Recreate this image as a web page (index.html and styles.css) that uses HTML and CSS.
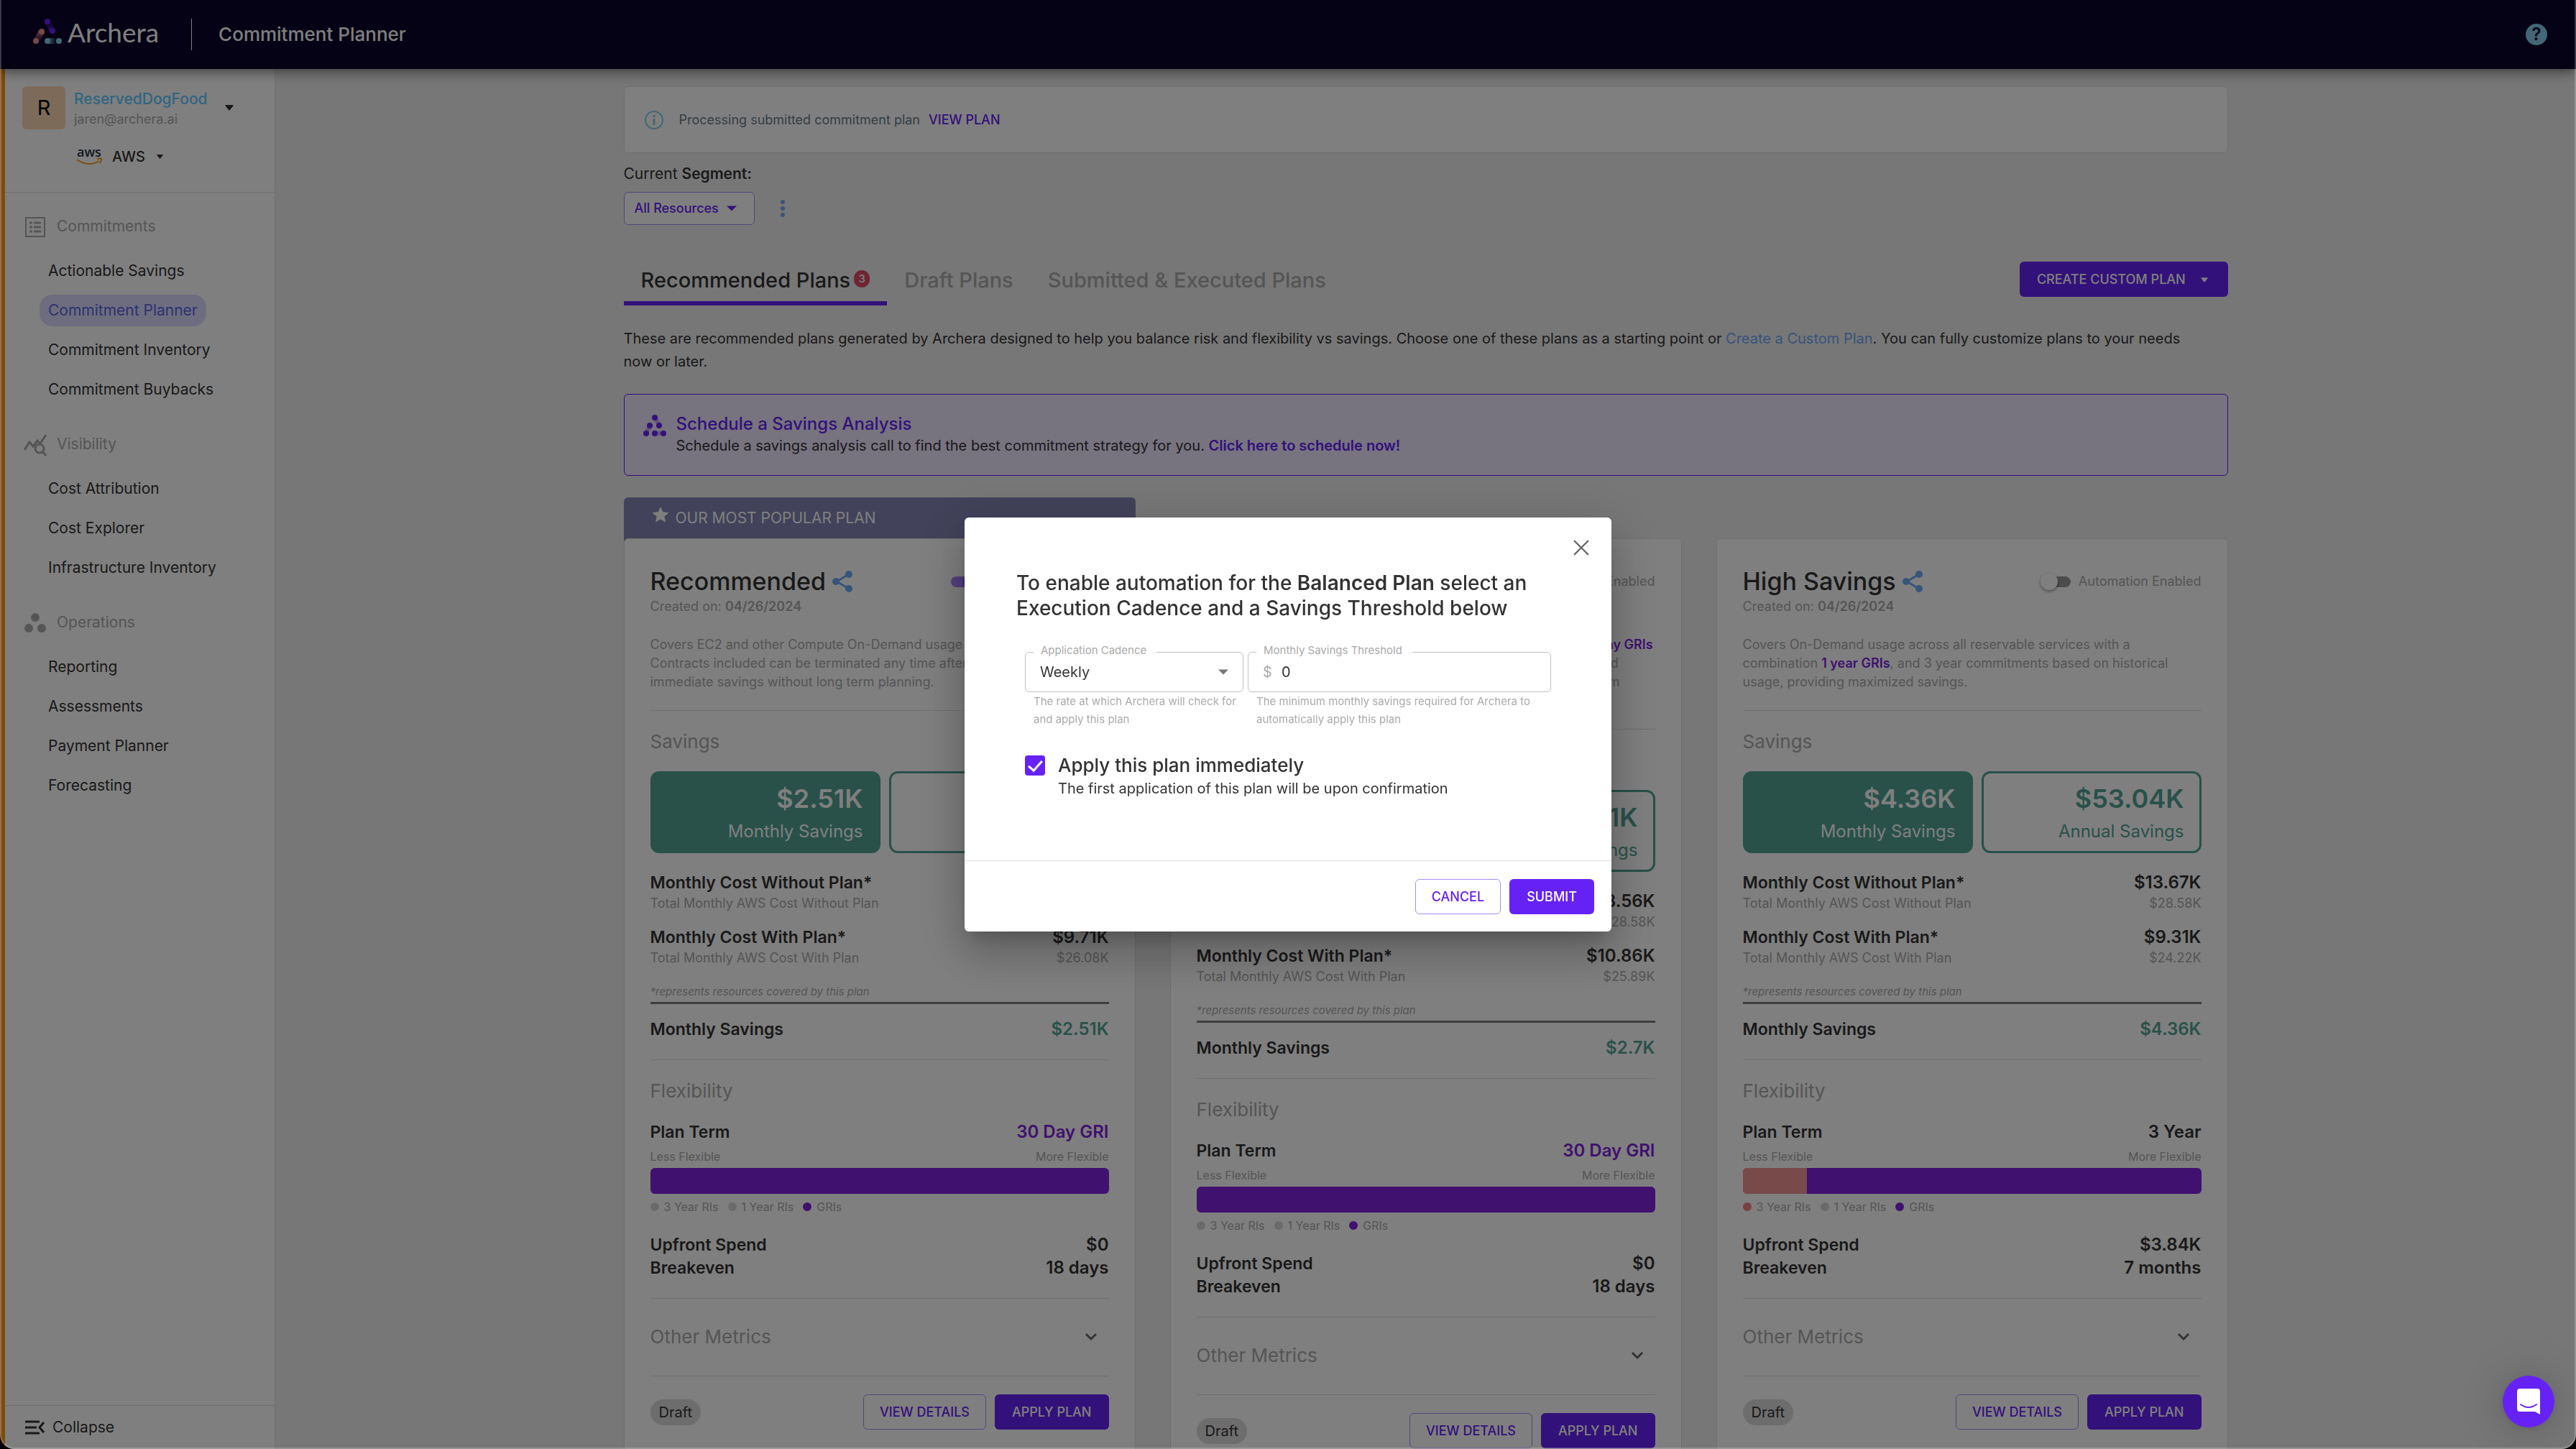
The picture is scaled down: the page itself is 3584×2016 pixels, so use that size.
FILE: index.html
```html
<!DOCTYPE html>
<html lang="en">
<head>
  <meta charset="UTF-8" />
  <meta name="viewport" content="width=device-width, initial-scale=1.0"/>
  <title>Archera - Commitment Planner</title>
  <link rel="stylesheet" href="styles.css">
</head>
<body>
  <svg class="sprite" aria-hidden="true">
    <symbol id="caret" viewBox="0 0 12 8"><path d="M1 0h10q1 0 .6 1L7 7q-1 1-2 0L.4 1Q0 0 1 0z"/></symbol>
    <symbol id="triangle" viewBox="0 0 10 5"><path d="M0 0l5 5 5-5z"/></symbol>
    <symbol id="share" viewBox="0 0 28 30"><path d="M23 5L6 15l17 10" fill="none" stroke="currentColor" stroke-width="3"/><circle cx="23" cy="5" r="5"/><circle cx="5" cy="15" r="5"/><circle cx="23" cy="25" r="5"/></symbol>
    <symbol id="chevron" viewBox="0 0 18 12"><path d="M2 2l7 7 7-7" fill="none" stroke="currentColor" stroke-width="3"/></symbol>
  </svg>

  <header class="top-bar">
    <svg class="logo-mark" viewBox="0 0 40 36">
      <defs>
        <linearGradient id="fadeTop" x1="0" y1="0" x2="0" y2="1"><stop offset="0" stop-color="#6622f5" stop-opacity=".1"/><stop offset="1" stop-color="#6622f5" stop-opacity=".8"/></linearGradient>
        <linearGradient id="fadeLeft" x1="0" y1="1" x2="0" y2="0"><stop offset="0" stop-color="#f09090" stop-opacity=".1"/><stop offset="1" stop-color="#f09090" stop-opacity=".8"/></linearGradient>
        <linearGradient id="fadeRight"><stop offset="0" stop-color="#86cfee" stop-opacity=".9"/><stop offset=".7" stop-color="#86cfee" stop-opacity=".1"/></linearGradient>
      </defs>
      <path d="M16 6l7-4 8 14-7 4z" fill="url(#fadeTop)"/>
      <path d="M8 16l8 4-8 13-7-4z" fill="url(#fadeLeft)"/>
      <path d="M20 27h16v8H20z" fill="url(#fadeRight)"/>
      <g fill="#6622f5"><circle cx="20" cy="4" r="4"/><circle cx="27" cy="17" r="4"/></g>
      <g fill="#f09090"><circle cx="12" cy="18" r="4"/><circle cx="4" cy="31" r="4"/></g>
      <g fill="#86cfee"><circle cx="20" cy="31" r="4"/><circle cx="36" cy="31" r="4"/></g>
    </svg>
    <span class="logo-text">Archera</span>
    <h1>Commitment Planner</h1>
    <button class="help-btn" aria-label="Help">?</button>
  </header>

  <div class="layout">
    <aside class="sidebar">
      <div class="account">
        <button class="account-btn">
          <span class="avatar">R</span>
          <span class="account-info"><b>ReservedDogFood</b><small>jaren@archera.ai</small></span>
          <svg class="caret"><use href="#caret"/></svg>
        </button>
        <button class="provider-btn">
          <svg class="aws" viewBox="0 0 36 24">
            <text x="1" y="12">aws</text>
            <path d="M1 16q16 11 31 2" fill="none" stroke="#f79a1f" stroke-width="2"/>
            <path d="M29 15q5-1 6 0t-2 6" fill="none" stroke="#f79a1f" stroke-width="2"/>
          </svg>
          AWS
          <svg class="caret small"><use href="#caret"/></svg>
        </button>
      </div>

      <nav class="menu">
        <section>
          <h2>
            <svg viewBox="0 0 32 32"><path d="M3 3h26v26H3z" fill="none" stroke="currentColor" stroke-width="2"/><path d="M8 10h4M8 16h4M8 22h4M14 10h10M14 16h10M14 22h10" stroke="currentColor" stroke-width="3"/></svg>
            Commitments
          </h2>
          <a href="#">Actionable Savings</a>
          <a href="#" class="active">Commitment Planner</a>
          <a href="#">Commitment Inventory</a>
          <a href="#">Commitment Buybacks</a>
        </section>
        <section>
          <h2>
            <svg viewBox="0 0 32 32"><path d="M1 23L8 12l5 6 6-8 4 4 8-12M27 26l4 5" fill="none" stroke="currentColor" stroke-width="3"/><circle cx="22" cy="21" r="6" fill="none" stroke="currentColor" stroke-width="3"/></svg>
            Visibility
          </h2>
          <a href="#">Cost Attribution</a>
          <a href="#">Cost Explorer</a>
          <a href="#">Infrastructure Inventory</a>
        </section>
        <section>
          <h2>
            <svg viewBox="0 0 32 32" fill="currentColor"><circle cx="16" cy="8" r="6"/><circle cx="7" cy="23" r="6"/><circle cx="25" cy="23" r="6"/></svg>
            Operations
          </h2>
          <a href="#">Reporting</a>
          <a href="#">Assessments</a>
          <a href="#">Payment Planner</a>
          <a href="#">Forecasting</a>
        </section>
      </nav>

      <button class="collapse-btn">
        <svg viewBox="0 0 28 20"><path d="M0 2h20M0 10h16M0 18h20M26 3l-6 7 6 7" fill="none" stroke="currentColor" stroke-width="3"/></svg>
        Collapse
      </button>
    </aside>

    <main>
      <div class="content">
        <div class="alert">
          <svg viewBox="0 0 28 28"><circle cx="14" cy="14" r="12" fill="none" stroke="currentColor" stroke-width="2"/><path d="M14 12v9M14 7v3" stroke="currentColor" stroke-width="3"/></svg>
          <span>Processing submitted commitment plan</span>
          <a href="#">VIEW PLAN</a>
        </div>

        <p class="segment-label">Current <b>Segment:</b></p>
        <div class="segment-row">
          <button class="segment-btn">All Resources <svg><use href="#triangle"/></svg></button>
          <button class="dots-btn" aria-label="More"><svg viewBox="0 0 6 24"><circle cx="3" cy="3" r="3"/><circle cx="3" cy="12" r="3"/><circle cx="3" cy="21" r="3"/></svg></button>
        </div>

        <div class="tabs">
          <button class="tab active">Recommended Plans<span class="badge">3</span></button>
          <button class="tab">Draft Plans</button>
          <button class="tab">Submitted &amp; Executed Plans</button>
          <button class="btn primary create-btn">CREATE CUSTOM PLAN <svg><use href="#caret"/></svg></button>
        </div>

        <p class="intro">These are recommended plans generated by Archera designed to help you balance risk and flexibility vs savings. Choose one of these plans as a starting point or <a href="#">Create a Custom Plan</a>. You can fully customize plans to your needs<br>now or later.</p>

        <div class="banner">
          <svg viewBox="0 0 32 30">
            <path d="M13 4l6-2 6 12-5 3zM7 13l6 3-6 10-5-3zM16 23h12v6H16z" opacity=".3"/>
            <circle cx="16" cy="4" r="4"/><circle cx="9" cy="15" r="4"/><circle cx="22" cy="15" r="4"/><circle cx="4" cy="26" r="4"/><circle cx="16" cy="26" r="4"/><circle cx="28" cy="26" r="4"/>
          </svg>
          <div>
            <h3>Schedule a Savings Analysis</h3>
            <p>Schedule a savings analysis call to find the best commitment strategy for you. <a href="#">Click here to schedule now!</a></p>
          </div>
        </div>

        <div id="plans" class="plans"></div>
      </div>
    </main>
  </div>

  <!-- Modal -->
  <div class="modal">
    <form class="modal-content" role="dialog" aria-labelledby="modalTitle">
      <button type="button" class="close-btn" aria-label="Close"><svg viewBox="0 0 20 20"><path d="M1 1l18 18M19 1L1 19" stroke="currentColor" stroke-width="2"/></svg></button>
      <div class="modal-body">
        <h2 id="modalTitle">To enable automation for the <b>Balanced Plan</b> select an Execution Cadence and a Savings Threshold below</h2>
        <div class="fields">
          <div class="field cadence">
            <label for="cadence">Application Cadence</label>
            <div class="field-box">
              <select id="cadence">
                <option>Weekly</option>
                <option>Monthly</option>
              </select>
              <svg><use href="#triangle"/></svg>
            </div>
            <p>The rate at which Archera will check for and apply this plan</p>
          </div>
          <div class="field threshold">
            <label for="threshold">Monthly Savings Threshold</label>
            <div class="field-box">
              <span>$</span>
              <input type="text" id="threshold" value="0">
            </div>
            <p>The minimum monthly savings required for Archera to automatically apply this plan</p>
          </div>
        </div>
        <div class="check-row">
          <input type="checkbox" id="applyNow" checked>
          <div>
            <label for="applyNow">Apply this plan immediately</label>
            <p>The first application of this plan will be upon confirmation</p>
          </div>
        </div>
      </div>
      <div class="modal-actions">
        <button type="button" class="btn outline">CANCEL</button>
        <button type="button" class="btn primary">SUBMIT</button>
      </div>
    </form>
  </div>

  <button class="chat-btn" aria-label="Open chat">
    <svg viewBox="0 0 32 36"><path d="M4 0h24q4 0 4 4v32l-7-4H4q-4 0-4-4V4q0-4 4-4z" fill="#fff"/><path d="M5 22q11 8 22 0" fill="none" stroke="#6622f5" stroke-width="2" stroke-linecap="round"/></svg>
  </button>
  <div class="window-edge"></div>

  <!-- JS -->
  <script>
    const plans = [
      {
        name: "Recommended",
        popular: true,
        automated: true,
        description: "Covers EC2 and other Compute On-Demand usage with GRIs.<br>Contracts included can be terminated any time after 30 days, for<br>immediate savings without long term planning.",
        monthly: "$2.51K", annual: "$30.54K",
        without: "$12.22K", totalWithout: "$28.58K",
        withPlan: "$9.71K", totalWith: "$26.08K",
        term: "30 Day GRI", gri: true, threeYear: 0,
        upfront: "$0", breakeven: "18 days"
      },
      {
        name: "Balanced",
        automated: false,
        description: "Covers On-Demand usage across all reservable services with <b>30 Day GRIs</b><br>and 1 year GRIs. All contracts included in the plans can be terminated<br>after 30 days or one year, giving flexible savings over the longer term<br>without a multi year commitment.",
        monthly: "$2.7K", annual: "$32.81K",
        without: "$13.56K", totalWithout: "$28.58K",
        withPlan: "$10.86K", totalWith: "$25.89K",
        term: "30 Day GRI", gri: true, threeYear: 0,
        upfront: "$0", breakeven: "18 days"
      },
      {
        name: "High Savings",
        automated: false,
        description: "Covers On-Demand usage across all reservable services with a combination <b>1 year GRIs</b>, and 3 year commitments based on historical usage, providing maximized savings.",
        monthly: "$4.36K", annual: "$53.04K",
        without: "$13.67K", totalWithout: "$28.58K",
        withPlan: "$9.31K", totalWith: "$24.22K",
        term: "3 Year", gri: false, threeYear: 14,
        upfront: "$3.84K", breakeven: "7 months"
      }
    ];

    function renderPlans() {
      const container = document.getElementById('plans');
      plans.forEach((p, i) => {
        const plan = document.createElement('div');
        plan.className = 'plan';
        plan.innerHTML = `
          ${p.popular ? `<div class="ribbon"><svg viewBox="0 0 24 24"><path d="M12 1l3.400 7.300 8 .9-6 5.400 1.700 7.900-7.100-4-7.100 4 1.700-7.900-6-5.400 8-.9z"/></svg>OUR MOST POPULAR PLAN</div>` : ''}
          <article class="plan-card">
            <div class="plan-head">
              <h3>${p.name}</h3>
              <button class="share-btn" aria-label="Share"><svg><use href="#share"/></svg></button>
              <input type="checkbox" class="switch" id="auto${i}" ${p.automated ? 'checked' : ''}>
              <label for="auto${i}">Automation Enabled</label>
            </div>
            <p class="muted">Created on: <b>04/26/2024</b></p>
            <p class="muted description">${p.description}</p>
            <hr>
            <h4>Savings</h4>
            <div class="savings">
              <div class="saving filled"><strong>${p.monthly}</strong><span>Monthly Savings</span></div>
              <div class="saving"><strong>${p.annual}</strong><span>Annual Savings</span></div>
            </div>
            <div class="cost">
              <div class="line"><span>Monthly Cost Without Plan*</span><span>${p.without}</span></div>
              <div class="line muted"><span>Total Monthly AWS Cost Without Plan</span><span>${p.totalWithout}</span></div>
            </div>
            <div class="cost">
              <div class="line"><span>Monthly Cost With Plan*</span><span>${p.withPlan}</span></div>
              <div class="line muted"><span>Total Monthly AWS Cost With Plan</span><span>${p.totalWith}</span></div>
            </div>
            <p class="note">*represents resources covered by this plan</p>
            <div class="line total"><span>Monthly Savings</span><span class="green">${p.monthly}</span></div>
            <hr>
            <h4>Flexibility</h4>
            <div class="line"><span>Plan Term</span><span class="${p.gri ? 'gri' : ''}">${p.term}</span></div>
            <div class="scale"><span>Less Flexible</span><span>More Flexible</span></div>
            <div class="bar"><div style="width:${p.threeYear}%"></div></div>
            <div class="legend">
              <span class="${p.threeYear ? 'three-year' : ''}">3 Year RIs</span>
              <span>1 Year RIs</span>
              <span class="gris">GRIs</span>
            </div>
            <div class="line"><span>Upfront Spend</span><span>${p.upfront}</span></div>
            <div class="line"><span>Breakeven</span><span>${p.breakeven}</span></div>
            <hr>
            <button class="metrics-btn">Other Metrics <svg><use href="#chevron"/></svg></button>
            <hr>
            <div class="plan-actions">
              <span class="chip">Draft</span>
              <button class="btn outline">VIEW DETAILS</button>
              <button class="btn primary">APPLY PLAN</button>
            </div>
          </article>
        `;
        container.appendChild(plan);
      });
    }

    renderPlans();
  </script>
</body>
</html>
```
FILE: styles.css
```css
:root {
  --primary-color: #6622f5;
  --primary-border: #a98bf7;
  --gri-color: #8022dd;
  --green: #52a292;
  --blue: #6fa8f5;
  --text: #333;
  --muted: #aaa;
  --line: #dfdfdf;
}

* {
  box-sizing: border-box;
}

body {
  font-family: Inter, 'Liberation Sans', sans-serif;
  font-size: 20px;
  line-height: 32px;
  color: var(--text);
  margin: 0;
  height: 100vh;
  overflow: hidden;
  display: flex;
  flex-direction: column;
  background: #eee;
}

h1, h2, h3, h4, p {
  margin: 0;
}

button, input, select {
  font: inherit;
  color: inherit;
  background: none;
  border: none;
  padding: 0;
  margin: 0;
}

button {
  cursor: pointer;
}

a {
  text-decoration: none;
  color: inherit;
}

svg {
  fill: currentColor;
  flex: none;
}

b {
  font-weight: 600;
}

.sprite {
  display: none;
}

/* Header */
.top-bar {
  display: flex;
  align-items: center;
  height: 96px;
  flex: none;
  padding: 0 40px 0 46px;
  background: #080428;
  color: #fff;
  box-shadow: 0 4px 16px rgba(0,0,0,0.5);
  z-index: 1;
}

.logo-mark {
  width: 40px;
  height: 36px;
  margin: 0 8px 8px 0;
}

.logo-text {
  font-family: Lato, sans-serif;
  font-size: 37px;
  line-height: 38px;
  padding: 0 45px 6px 0;
  margin-right: 37px;
  border-right: 1px solid #fff;
}

.top-bar h1 {
  flex: 1;
  font-size: 26px;
  font-weight: 500;
}

.help-btn {
  width: 30px;
  height: 30px;
  border-radius: 50%;
  background: #86cfee;
  color: #080428;
  font-size: 24px;
  font-weight: 600;
  line-height: 30px;
}

.layout {
  flex: 1;
  min-height: 0;
  display: flex;
}

/* Sidebar */
.sidebar {
  width: 383px;
  flex: none;
  display: flex;
  flex-direction: column;
  font-size: 21px;
  background: #fff;
  border-left: 7px solid #f9971f;
  border-right: 1px solid var(--line);
}

.account {
  padding: 24px 24px 33px;
  border-bottom: 1px solid var(--line);
}

.account-btn {
  display: flex;
  align-items: center;
  text-align: left;
}

.avatar {
  width: 60px;
  height: 60px;
  border-radius: 6px;
  background: #fbd6b2;
  color: #000;
  font-size: 29px;
  line-height: 60px;
  text-align: center;
  margin-right: 12px;
}

.account-info b {
  display: block;
  font-weight: 500;
  line-height: 32px;
  color: #5ecbff;
}

.account-info small {
  display: block;
  font-size: 18px;
  line-height: 24px;
  color: var(--muted);
}

.caret {
  width: 12px;
  height: 8px;
  margin-left: 24px;
}

.caret.small {
  width: 9px;
  height: 6px;
  margin-left: 16px;
}

.provider-btn {
  display: flex;
  align-items: center;
  margin: 22px 0 0 75px;
  font-size: 20px;
  font-weight: 500;
}

.aws {
  width: 36px;
  height: 24px;
  margin-right: 14px;
  overflow: visible;
}

.aws text {
  font-family: 'Open Sans', sans-serif;
  font-size: 18px;
  font-weight: 600;
  fill: #252f3e;
}

.menu {
  flex: 1;
  padding: 30px 24px 0;
}

.menu section {
  margin-bottom: 37px;
}

.menu h2 {
  display: flex;
  align-items: center;
  font-size: 21px;
  font-weight: 400;
  color: var(--muted);
  margin-bottom: 23px;
}

.menu h2 svg {
  width: 32px;
  height: 32px;
  margin: 2px 14px 0 2px;
}

.menu a {
  display: block;
  width: fit-content;
  margin: 0 0 11px 24px;
  padding: 6px 12px;
  border-radius: 18px;
}

.menu a.active {
  background: #dadbff;
  color: #5a66e0;
}

.collapse-btn {
  display: flex;
  align-items: center;
  padding: 14px 28px;
  border-top: 1px solid var(--line);
}

.collapse-btn svg {
  width: 28px;
  height: 20px;
  margin-right: 10px;
}

/* Content */
main {
  flex: 1;
  min-width: 0;
  padding-top: 24px;
}

.content {
  max-width: 2232px;
  margin: auto;
}

.alert {
  display: flex;
  align-items: center;
  height: 93px;
  padding: 0 27px;
  background: #fff;
  border: 1px solid var(--line);
  border-radius: 6px;
  font-size: 18px;
  color: #6c7c88;
}

.alert svg {
  width: 28px;
  height: 28px;
  color: #86cfee;
}

.alert span {
  margin: 0 12px 0 21px;
}

.alert a {
  color: var(--primary-color);
  font-weight: 500;
}

.segment-label {
  margin-top: 13px;
  font-size: 21px;
}

.segment-row {
  display: flex;
  align-items: center;
  margin-top: 9px;
}

.segment-btn {
  height: 46px;
  padding: 0 24px 0 14px;
  border: 1px solid var(--primary-border);
  border-radius: 6px;
  background: #fff;
  color: var(--primary-color);
  font-size: 18px;
  font-weight: 500;
}

.segment-btn svg {
  width: 14px;
  height: 8px;
  margin: 0 0 2px 6px;
}

.dots-btn {
  margin-left: 36px;
  color: var(--blue);
  line-height: 0;
}

.dots-btn svg {
  width: 6px;
  height: 24px;
}

.tabs {
  display: flex;
  align-items: flex-start;
  margin-top: 47px;
}

.tab {
  display: flex;
  padding: 12px 24px 11px;
  border-bottom: 6px solid transparent;
  font-size: 29px;
  font-weight: 500;
  line-height: 36px;
  color: var(--muted);
}

.tab.active {
  color: var(--text);
  border-color: var(--primary-color);
}

.badge {
  width: 22px;
  height: 24px;
  margin: 4px 0 0 5px;
  border-radius: 12px;
  background: #de4a64;
  color: #fff;
  font-size: 15px;
  line-height: 24px;
  text-align: center;
}

.btn {
  height: 49px;
  padding: 0 24px;
  border-radius: 6px;
  font-size: 18px;
  font-weight: 500;
}

.btn.primary {
  background: var(--primary-color);
  color: #fff;
}

.btn.outline {
  padding: 0 22px;
  border: 1px solid var(--primary-border);
  background: #fff;
  color: var(--primary-color);
}

.create-btn {
  margin: 4px 0 0 auto;
}

.create-btn svg {
  width: 10px;
  height: 7px;
  margin: 0 4px 2px 16px;
}

.intro {
  margin-top: 30px;
}

.intro a {
  color: var(--blue);
}

.banner {
  display: flex;
  margin-top: 29px;
  padding: 26px;
  border: 1px solid var(--primary-color);
  border-radius: 6px;
  background: #eee6fe;
}

.banner > svg {
  width: 32px;
  height: 30px;
  margin: 2px 14px 0 0;
  color: var(--primary-color);
}

.banner h3 {
  font-size: 24px;
  font-weight: 500;
  line-height: 30px;
  color: var(--primary-color);
}

.banner p {
  line-height: 30px;
}

.banner a {
  color: var(--primary-color);
  font-weight: 600;
}

/* Plans */
.plans {
  display: grid;
  grid-template-columns: repeat(3, 1fr);
  align-items: start;
  gap: 48px;
  margin-top: 30px;
}

.plan {
  display: grid;
  grid-template-rows: 57px auto;
}

.ribbon {
  height: 63px;
  padding: 8px 39px;
  border-radius: 6px 6px 0 0;
  background: #8484b4;
  color: #fff;
  font-size: 21px;
  line-height: 42px;
}

.ribbon svg {
  width: 24px;
  height: 24px;
  margin-right: 9px;
}

.plan-card {
  grid-row: 2;
  padding: 37px 36px;
  background: #fff;
  border: 1px solid var(--line);
  border-radius: 6px;
}

.plan-head {
  display: flex;
  align-items: center;
  height: 44px;
}

.plan-head h3 {
  font-size: 34px;
  font-weight: 500;
}

.share-btn {
  margin: 0 auto 0 9px;
  color: var(--blue);
  line-height: 0;
}

.share-btn svg {
  width: 28px;
  height: 30px;
}

.plan-head label {
  font-size: 18px;
  color: var(--muted);
}

.switch {
  appearance: none;
  width: 38px;
  height: 15px;
  margin-right: 11px;
  border-radius: 8px;
  background: #999;
  display: flex;
  align-items: center;
}

.switch::before {
  content: "";
  width: 24px;
  height: 24px;
  flex: none;
  margin: 0 -4px;
  border-radius: 50%;
  background: #fff;
  box-shadow: 0 2px 4px rgba(0,0,0,0.4);
}

.switch:checked {
  background: #a880ff;
  justify-content: flex-end;
}

.switch:checked::before {
  background: var(--primary-color);
}

.muted {
  font-size: 18px;
  line-height: 26px;
  color: var(--muted);
}

.description {
  margin-top: 27px;
}

.description b {
  color: var(--gri-color);
}

hr {
  height: 1px;
  margin: 26px 0 25px;
  border: none;
  background: var(--line);
}

h4 {
  margin-bottom: 23px;
  font-size: 26px;
  font-weight: 400;
  line-height: 36px;
  color: var(--muted);
}

.savings {
  display: flex;
  gap: 12px;
  margin-bottom: 25px;
}

.saving {
  flex: 1;
  padding: 13px 21px 9px;
  border: 3px solid var(--green);
  border-radius: 12px;
  color: var(--green);
  text-align: right;
}

.saving.filled {
  flex: 0 0 320px;
  background: var(--green);
  color: #fff;
}

.saving strong {
  display: block;
  font-size: 36px;
  font-weight: 600;
  line-height: 44px;
  margin-bottom: 6px;
}

.saving span {
  display: block;
  font-size: 24px;
  line-height: 36px;
}

.cost {
  margin-bottom: 18px;
}

.line {
  display: flex;
  justify-content: space-between;
  font-size: 24px;
  font-weight: 600;
}

.line span:first-child {
  font-size: 23px;
}

.line.muted span {
  font-size: 18px;
  font-weight: 400;
}

.note {
  margin-top: 22px;
  padding-bottom: 2px;
  border-bottom: 3px solid #7c7c7c;
  font-size: 15px;
  font-style: italic;
  line-height: 24px;
  color: var(--muted);
}

.total {
  margin-top: 19px;
}

.green {
  color: var(--green);
}

.gri {
  color: var(--gri-color);
}

.scale {
  display: flex;
  justify-content: space-between;
  margin: 6px 0 4px;
  font-size: 16px;
  line-height: 24px;
  color: var(--muted);
}

.bar {
  height: 36px;
  border-radius: 6px;
  overflow: hidden;
  background: var(--gri-color);
}

.bar div {
  height: 100%;
  background: #f09494;
}

.legend {
  display: flex;
  gap: 13px;
  margin: 6px 0 25px;
  font-size: 16px;
  line-height: 24px;
  color: var(--muted);
}

.legend span::before {
  content: "";
  display: inline-block;
  width: 12px;
  height: 12px;
  margin-right: 7px;
  border-radius: 50%;
  background: #d5d5d5;
}

.legend .three-year::before {
  background: #f08080;
}

.legend .gris::before {
  background: var(--gri-color);
}

.metrics-btn {
  display: flex;
  align-items: center;
  justify-content: space-between;
  width: 100%;
  padding: 10px 16px 10px 0;
  font-size: 26px;
  line-height: 36px;
  color: var(--muted);
}

.metrics-btn svg {
  width: 18px;
  height: 12px;
  color: #666;
}

.plan-actions {
  display: flex;
  align-items: center;
  gap: 12px;
}

.chip {
  margin-right: auto;
  padding: 2px 12px;
  border-radius: 18px;
  background: #dadada;
}

/* Modal */
.modal {
  position: fixed;
  top: 0; left: 0; right: 0; bottom: 0;
  background-color: rgba(0,0,0,0.5);
  display: flex;
  align-items: center;
  justify-content: center;
  z-index: 10;
}

.modal-content {
  position: relative;
  width: 900px;
  background: #fff;
  border-radius: 6px;
  box-shadow: 0 16px 22px -10px rgba(0,0,0,0.2), 0 36px 57px 4px rgba(0,0,0,0.14), 0 14px 69px 12px rgba(0,0,0,0.12);
}

.close-btn {
  position: absolute;
  top: 31px;
  right: 31px;
  color: #666;
  line-height: 0;
}

.close-btn svg {
  width: 22px;
  height: 22px;
}

.modal-body {
  padding: 74px 72px 84px;
}

.modal h2 {
  font-size: 28px;
  font-weight: 500;
  line-height: 35px;
}

.fields {
  display: flex;
  gap: 6px;
  margin: 43px 12px 36px;
}

.field {
  position: relative;
}

.cadence {
  flex: 0 0 304px;
}

.threshold {
  flex: 1;
}

.field label {
  position: absolute;
  top: -12px;
  left: 12px;
  padding: 0 14px 0 10px;
  background: #fff;
  font-size: 15px;
  line-height: 20px;
  color: var(--muted);
}

.field-box {
  display: flex;
  align-items: center;
  height: 56px;
  padding: 0 20px;
  border: 1px solid #c0c0c0;
  border-radius: 6px;
}

.field-box select, .field-box input {
  appearance: none;
  flex: 1;
  min-width: 0;
}

.field-box span {
  width: 26px;
  color: var(--muted);
}

.field-box svg {
  width: 14px;
  height: 8px;
  color: #777;
}

.field p {
  padding-left: 12px;
  font-size: 15px;
  line-height: 25px;
  color: var(--muted);
}

.check-row {
  display: flex;
  gap: 18px;
  margin-left: 12px;
}

.check-row input {
  appearance: none;
  width: 28px;
  height: 28px;
  margin-top: 2px;
  border-radius: 4px;
  background: var(--primary-color);
  display: flex;
  justify-content: center;
}

.check-row input::before {
  content: "";
  width: 8px;
  height: 16px;
  margin-top: 3px;
  border: solid #fff;
  border-width: 0 3px 3px 0;
  transform: rotate(42deg);
}

.check-row label {
  display: block;
  font-size: 26px;
  font-weight: 500;
}

.modal-actions {
  display: flex;
  justify-content: flex-end;
  gap: 12px;
  padding: 25px 24px 24px;
  border-top: 1px solid var(--line);
}

.chat-btn {
  position: fixed;
  right: 30px;
  bottom: 30px;
  width: 72px;
  height: 72px;
  border-radius: 50%;
  background: var(--primary-color);
  box-shadow: 0 2px 12px rgba(0,0,0,0.1), 0 4px 64px rgba(0,0,0,0.2);
  line-height: 0;
  z-index: 11;
}

.chat-btn svg {
  width: 32px;
  height: 36px;
}

/* Light rim of the app window with rounded bottom corners */
.window-edge {
  position: fixed;
  inset: 0;
  border: 2px solid rgba(255,255,255,0.22);
  border-top: none;
  border-radius: 0 0 20px 20px;
  box-shadow: 0 0 0 20px #000;
  pointer-events: none;
  z-index: 12;
}
```
